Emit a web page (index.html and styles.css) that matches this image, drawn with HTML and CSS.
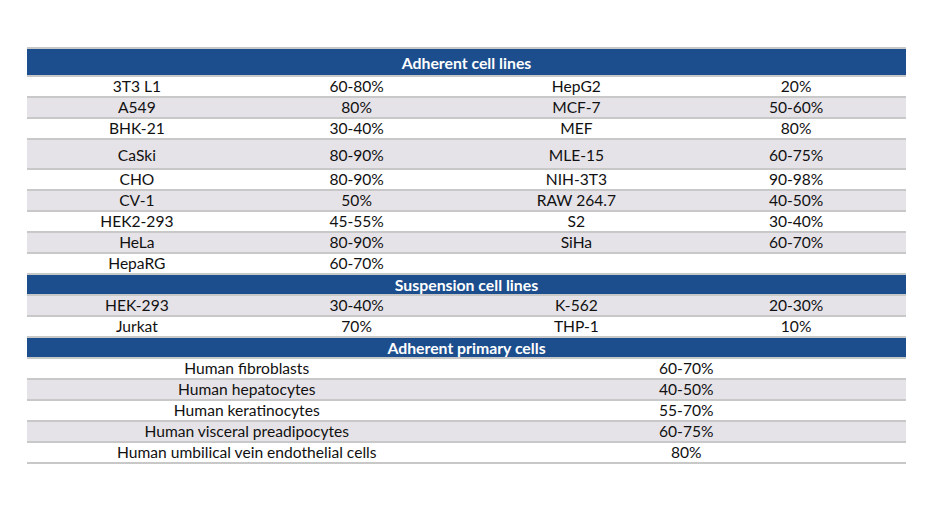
FILE: index.html
```html
<!DOCTYPE html>
<html>
<head>
<meta charset="utf-8">
<link rel="stylesheet" href="styles.css">
</head>
<body>
<div class="sheet">
  <div class="row head tall-head">Adherent cell lines</div>
  <div class="row four"><span>3T3 L1</span><span>60-80%</span><span>HepG2</span><span>20%</span></div>
  <div class="row four alt"><span>A549</span><span>80%</span><span>MCF-7</span><span>50-60%</span></div>
  <div class="row four"><span>BHK-21</span><span>30-40%</span><span>MEF</span><span>80%</span></div>
  <div class="row four alt tall"><span>CaSki</span><span>80-90%</span><span>MLE-15</span><span>60-75%</span></div>
  <div class="row four"><span>CHO</span><span>80-90%</span><span>NIH-3T3</span><span>90-98%</span></div>
  <div class="row four alt"><span>CV-1</span><span>50%</span><span>RAW 264.7</span><span>40-50%</span></div>
  <div class="row four"><span>HEK2-293</span><span>45-55%</span><span>S2</span><span>30-40%</span></div>
  <div class="row four alt"><span>HeLa</span><span>80-90%</span><span>SiHa</span><span>60-70%</span></div>
  <div class="row four"><span>HepaRG</span><span>60-70%</span><span></span><span></span></div>
  <div class="row head">Suspension cell lines</div>
  <div class="row four alt"><span>HEK-293</span><span>30-40%</span><span>K-562</span><span>20-30%</span></div>
  <div class="row four"><span>Jurkat</span><span>70%</span><span>THP-1</span><span>10%</span></div>
  <div class="row head">Adherent primary cells</div>
  <div class="row two"><span>Human fibroblasts</span><span>60-70%</span></div>
  <div class="row two alt"><span>Human hepatocytes</span><span>40-50%</span></div>
  <div class="row two"><span>Human keratinocytes</span><span>55-70%</span></div>
  <div class="row two alt"><span>Human visceral preadipocytes</span><span>60-75%</span></div>
  <div class="row two"><span>Human umbilical vein endothelial cells</span><span>80%</span></div>
</div>
</body>
</html>
```
FILE: styles.css
```css
html, body {
  margin: 0;
  padding: 0;
  background: #ffffff;
}
body {
  font-family: "Lato", "Liberation Sans", sans-serif;
  color: #111111;
}
.sheet {
  width: 879px;
  margin: 47px 0 0 27px;
  border-top: 2px solid #c8c8c8;
}
.row {
  box-sizing: border-box;
  height: 21px;
  border-bottom: 2px solid #c8c8c8;
  font-size: 15.6px;
  line-height: 19px;
  text-align: center;
  white-space: nowrap;
}
.four {
  display: grid;
  grid-template-columns: repeat(4, 1fr);
}
.two {
  display: grid;
  grid-template-columns: repeat(2, 1fr);
}
.alt {
  background: #e6e3e8;
}
.tall {
  height: 30px;
  line-height: 30px;
}
.head {
  background: #1c4e8e;
  color: #ffffff;
  font-weight: bold;
  font-size: 15.8px;
}
.tall-head {
  height: 28px;
  line-height: 28px;
}
```
